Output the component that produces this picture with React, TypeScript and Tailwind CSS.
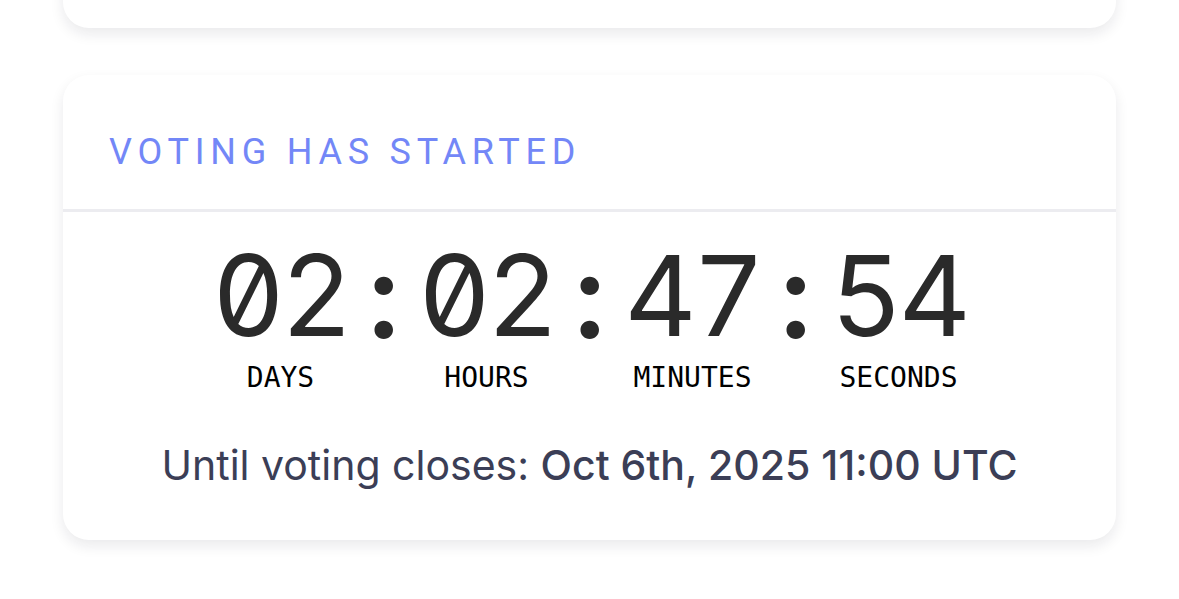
const units = [
  { value: "02", label: "DAYS" },
  { value: "02", label: "HOURS" },
  { value: "47", label: "MINUTES" },
  { value: "54", label: "SECONDS" },
];

const mono = "font-['DejaVu_Sans_Mono','Liberation_Mono',monospace]";
const digits = "font-['Inter',sans-serif] slashed-zero tabular-nums";

const App = () => {
  return (
    <div className="min-h-[599px] bg-white px-[63px] font-['Inter','Noto_Sans',sans-serif] overflow-hidden">
      {/* previous card, scrolled mostly out of view */}
      <div className="-mt-[72px] h-[100px] rounded-[26px] bg-white shadow-[0_6px_14px_rgba(20,20,40,0.09)]" />

      {/* voting card */}
      <div className="mt-[47px] rounded-[26px] bg-white shadow-[0_6px_14px_rgba(20,20,40,0.09)]">
        <div className="flex h-[137px] items-center border-b-[3px] border-[#ececf0] px-[46px] pt-[20px]">
          <h2 className="text-[36px] tracking-[0.16em] text-[#7387f7] font-['Roboto',sans-serif]">
            VOTING HAS STARTED
          </h2>
        </div>

        <div className="flex flex-col items-center pt-[39px] pb-[54px]">
          <div className="flex items-start">
            {units.map((u, i) => (
              <div key={u.label} className="flex items-start">
                {i > 0 && (
                  <span
                    className={`${digits} w-[62px] text-center text-[118px] font-semibold leading-[88px] text-[#2a2a2a]`}
                  >
                    :
                  </span>
                )}
                <div className="flex w-[144px] flex-col items-center">
                  <span className={`${digits} text-[112px] leading-[88px] tracking-[-0.04em] text-[#2a2a2a]`}>
                    {u.value}
                  </span>
                  <span className={`${mono} mt-[25px] text-[28px] font-medium leading-none text-black`}>
                    {u.label}
                  </span>
                </div>
              </div>
            ))}
          </div>

          <p className="mt-[53px] text-[41px] leading-none text-[#3b3e56]">
            Until voting closes: <span className="font-medium">Oct 6th, 2025 11:00 UTC</span>
          </p>
        </div>
      </div>
    </div>
  );
};

export default App;
